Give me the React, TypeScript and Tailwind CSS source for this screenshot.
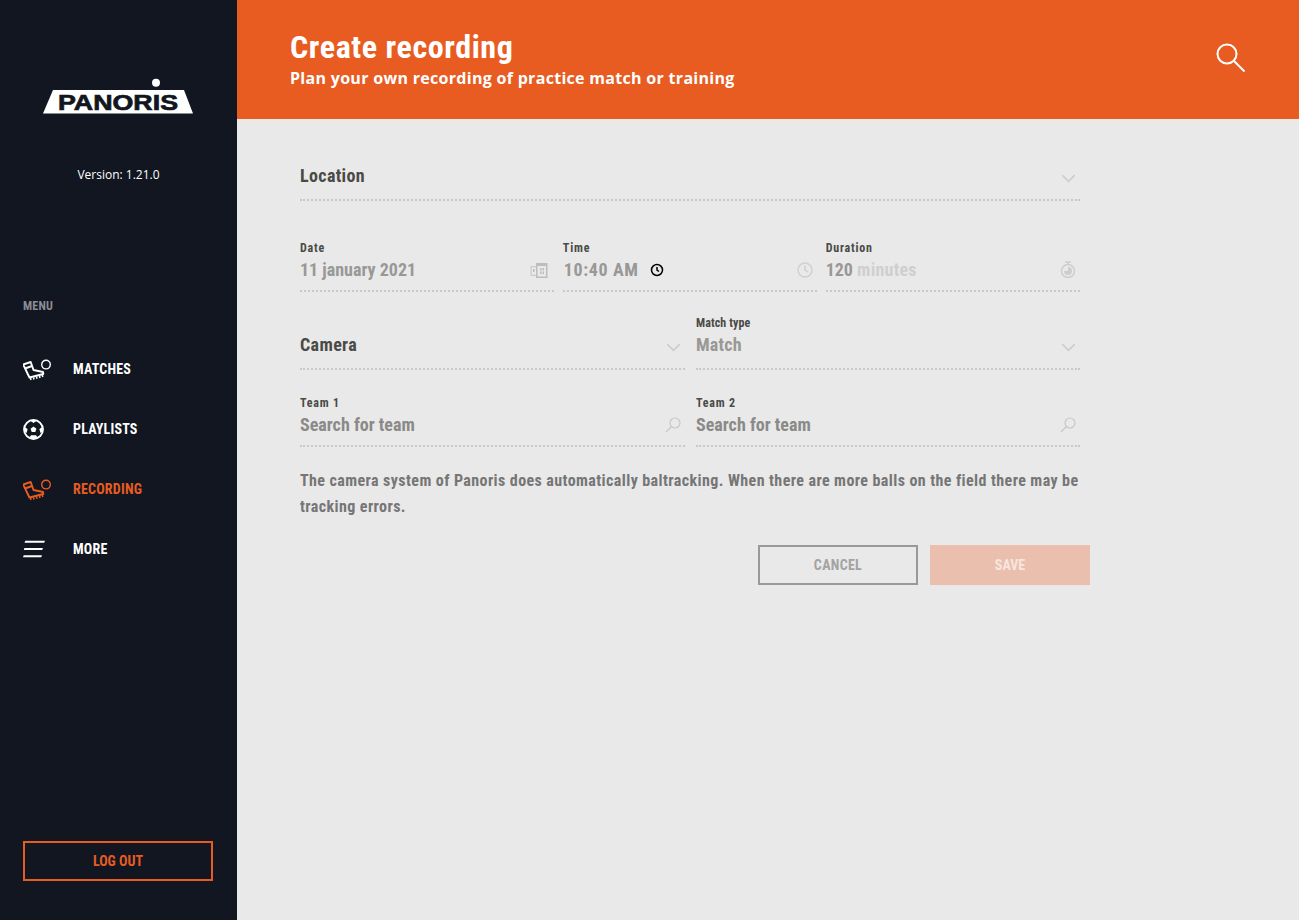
import { ChevronDown } from "lucide-react";
import type { ReactNode } from "react";

const condensed = "[font-family:'Roboto_Condensed','Roboto','Liberation_Sans_Narrow',sans-serif] [font-stretch:75%]";

function BootIcon({ className }: { className: string }) {
  return (
    <svg viewBox="5 2 30 24" className={className} fill="none" stroke="currentColor" strokeWidth="1.9" strokeLinejoin="round">
      <circle cx="28" cy="9.6" r="4.3" strokeWidth="1.4" />
      <path d="M5.2 9.5 12.7 7 15.5 15 25 17 25.3 19 11.5 22.5 10 19.5Z" />
      <path d="M7 13.5 14 11" />
      <path d="M12.5 23 13 25M15.5 22.5 16 24.5M18.5 21.8 19 23.8M21.5 21 22 23M24.3 20 24.8 22" strokeWidth="1.5" />
    </svg>
  );
}

function BallIcon({ className }: { className: string }) {
  return (
    <svg viewBox="0 0 21 21" className={className}>
      <circle cx="10.5" cy="10.5" r="9.4" fill="none" stroke="currentColor" strokeWidth="2" />
      <path d="M10.5 7.6 13.4 9.7 12.3 13H8.7L7.6 9.7Z" fill="currentColor" />
      <path d="M7 1.5 10.5 4 14 1.5ZM1.5 8 4.6 10 3.6 14 1.5 12.5ZM19.5 8 16.4 10 17.4 14 19.5 12.5ZM6.5 18.5 8 16.2H13L14.5 18.5 10.5 19.5Z" fill="currentColor" />
    </svg>
  );
}

function MoreIcon({ className }: { className: string }) {
  return (
    <svg viewBox="0 0 22 18" className={className} fill="currentColor">
      <path d="M2.3 0.7H22L21.2 2.7H1.5ZM1.4 7.9H20L19.2 9.9H0.8ZM0.7 15.2H19L18.2 17.2H0Z" />
    </svg>
  );
}

function NavItem({ label, active, icon }: { label: string; active?: boolean; icon: ReactNode }) {
  return (
    <div className={`flex h-[60px] items-center ${active ? "text-[#e85c22]" : "text-white"}`}>
      <div className="w-[50px]">{icon}</div>
      <span className={`${condensed} text-[14px] font-bold tracking-[0.2px]`}>{label}</span>
    </div>
  );
}

function Field({
  label,
  value,
  icon,
  big,
  tight,
  pad = "pb-[8px]",
  className,
  children,
}: {
  label?: string;
  value?: string;
  icon: ReactNode;
  big?: boolean;
  tight?: boolean;
  pad?: string;
  className?: string;
  children?: ReactNode;
}) {
  return (
    <div className={`flex min-w-0 flex-col justify-end border-b-2 border-dotted border-[#c8c8c8] ${pad}`}>
      {label && (
        <div className={`${condensed} mb-[3px] text-[12px] leading-[14px] font-bold text-[#4a4a46] ${tight ? "tracking-[0.1px]" : "tracking-[0.8px]"}`}>
          {label}
        </div>
      )}
      <div className="flex h-[24px] items-center justify-between">
        <div className={`${condensed} text-[18px] leading-[24px] font-bold ${big ? "tracking-[0.35px] text-[#4a4a46]" : className ?? "text-[#999896]"}`}>
          {value}
          {children}
        </div>
        {icon}
      </div>
    </div>
  );
}

const chevron = <ChevronDown size={23} strokeWidth={1.7} className="mt-1 text-[#cdcdcd]" />;
const search = (
  <svg viewBox="0 0 16 16" className="mr-1 h-4 w-4 text-[#c8c8c8]" fill="none" stroke="currentColor" strokeWidth="1.2">
    <circle cx="10" cy="6" r="5" />
    <path d="M6.5 9.5 1 15" />
  </svg>
);

export default function App() {
  return (
    <div className="flex min-h-[920px] bg-[#e9e9e9] [font-family:'Roboto',sans-serif]">
      <aside className="flex h-[920px] w-[237px] shrink-0 flex-col bg-[#111621] px-[23px] text-white">
        <div className="mt-[78px] ml-[20px]">
          <svg viewBox="0 0 150 36" className="h-[36px] w-[150px]">
            <circle cx="113" cy="4.7" r="4" fill="#fff" />
            <polygon points="10,12 141,12 150,35.5 0,35.5" fill="#fff" />
            <text x="75" y="32" textAnchor="middle" fontFamily="'Liberation Sans'" fontWeight="700" fontSize="22" textLength="120" lengthAdjust="spacingAndGlyphs" fill="#111621" stroke="#111621" strokeWidth="0.7">PANORIS</text>
          </svg>
        </div>
        <p className="mt-[51px] text-center text-[12px] leading-[20px] [font-family:'Open_Sans',sans-serif]">Version: 1.21.0</p>
        <p className={`${condensed} mt-[112px] text-[12px] leading-[18px] font-bold tracking-[0.2px] text-[#8b8d92]`}>MENU</p>
        <nav className="mt-[24px]">
          <NavItem label="MATCHES" icon={<BootIcon className="h-[24px] w-[30px]" />} />
          <NavItem label="PLAYLISTS" icon={<BallIcon className="h-[21px] w-[21px]" />} />
          <NavItem label="RECORDING" active icon={<BootIcon className="h-[24px] w-[30px]" />} />
          <NavItem label="MORE" icon={<MoreIcon className="h-[18px] w-[22px]" />} />
        </nav>
        <button className={`${condensed} mt-auto mb-[39px] h-[40px] w-[190px] border-2 border-[#e85c22] text-[14px] font-bold text-[#e85c22]`}>
          LOG OUT
        </button>
      </aside>

      <main className="min-w-0 flex-1">
        <header className="flex h-[119px] items-center justify-between bg-[#e85c22] pr-[53px] pl-[53px] text-white">
          <div>
            <h1 className={`${condensed} text-[32px] leading-[34px] font-bold tracking-[0.6px]`}>Create recording</h1>
            <p className="mt-[2px] text-[16px] leading-[24px] font-bold tracking-[0.3px] [font-family:'Open_Sans',sans-serif]">Plan your own recording of practice match or training</p>
          </div>
          <svg viewBox="0 0 30 30" className="-mt-[4px] h-[30px] w-[30px]" fill="none" stroke="currentColor" strokeWidth="2">
            <circle cx="11" cy="11" r="9.5" />
            <path d="M18 18 28.5 28.5" />
          </svg>
        </header>

        <div className="w-[853px] pt-[45px] pl-[63px]">
          <div className="w-[780px]">
            <Field value="Location" big pad="pb-[11px]" icon={chevron} />
            <div className="mt-[40px] grid grid-cols-3 gap-x-[8.5px]">
              <Field label="Date" value="11 january 2021" icon={
                <svg viewBox="0 0 18 15" className="mr-[6px] h-[15px] w-[18px] text-[#bdbdbd]" fill="currentColor">
                  <path d="M6 0h11.5v15H6zM7.5 3v10.5h8.5V3z" />
                  <path d="M0.5 3H6v1.2H1.7v7.6H6V13H0.5z" opacity="0.7" />
                  <path d="M10 5h1.5v2.5H10zM12.5 5H14v2.5h-1.5zM10 8.5h1.5V11H10zM12.5 8.5H14V11h-1.5zM3 6h1.5v3H3z" />
                </svg>
              } />
              <Field label="Time" icon={
                <svg viewBox="0 0 16 16" className="mr-1 h-4 w-4 text-[#d0d0d0]" fill="none" stroke="currentColor" strokeWidth="1.5">
                  <circle cx="8" cy="8" r="7" />
                  <path d="M8 3.5V8l3 2" />
                </svg>
              }>
                <span className="inline-flex items-center pl-[1px]">
                  <span className="tracking-[0.6px]">10:40 AM</span>
                  <svg viewBox="0 0 14 14" className="ml-[12px] h-[14px] w-[14px] text-black" fill="none" stroke="currentColor" strokeWidth="1.5">
                    <circle cx="7" cy="7" r="5.5" />
                    <path d="M7 4v3l2 1.5" />
                  </svg>
                </span>
              </Field>
              <Field label="Duration" icon={
                <svg viewBox="0 0 16 18" className="mr-[4px] h-[18px] w-4 text-[#cdcdcd]" fill="none" stroke="currentColor" strokeWidth="1.5">
                  <path d="M5 1h6M8 1v2" />
                  <circle cx="8" cy="10" r="6.5" />
                  <path d="M8 10V6a4 4 0 1 1-4 4z" fill="currentColor" stroke="none" />
                </svg>
              }>
                120 <span className="tracking-[0.25px] text-[#cfcfcf]">minutes</span>
              </Field>
            </div>
            <div className="mt-[24px] grid grid-cols-[385px_384px] items-end gap-x-[11px]">
              <Field value="Camera" big pad="pb-[11px]" icon={chevron} />
              <Field label="Match type" value="Match" pad="pb-[11px]" tight className="tracking-[0.2px] text-[#999896]" icon={chevron} />
            </div>
            <div className="mt-[26px] grid grid-cols-[385px_384px] gap-x-[11px]">
              <Field label="Team 1" value="Search for team" className="text-[#8a8a88]" icon={search} />
              <Field label="Team 2" value="Search for team" className="text-[#8a8a88]" icon={search} />
            </div>
            <p className={`${condensed} mt-[21px] text-[16px] leading-[26px] font-bold tracking-[0.41px] text-[#767676]`}>
              The camera system of Panoris does automatically baltracking. When there are more balls on the field there may be tracking errors.
            </p>
          </div>
          <div className="mt-[25px] flex justify-end gap-[12px]">
            <button className={`${condensed} h-[40px] w-[160px] border-2 border-[#999999] text-[14px] font-bold tracking-[0.3px] text-[#a3a3a3]`}>CANCEL</button>
            <button className={`${condensed} h-[40px] w-[160px] bg-[#ebbfae] text-[14px] font-bold text-[#f7e6df]`}>SAVE</button>
          </div>
        </div>
      </main>
    </div>
  );
}
